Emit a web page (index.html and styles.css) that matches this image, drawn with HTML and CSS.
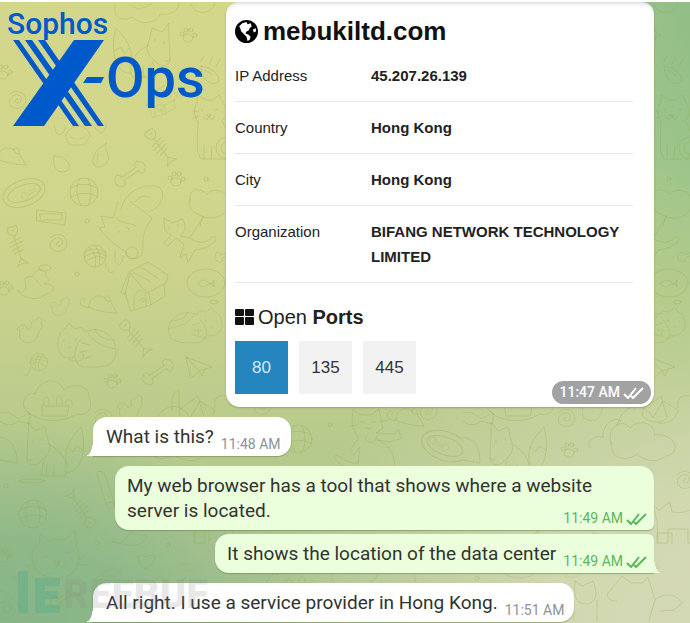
FILE: index.html
```html
<!DOCTYPE html>
<html lang="en">
<head>
<meta charset="utf-8">
<title>Chat</title>
<link rel="stylesheet" href="styles.css">
</head>
<body>
<svg class="wallpaper" aria-hidden="true">
  <defs>
    <g id="paw"><ellipse cx="0" cy="3" rx="5" ry="4"/><circle cx="-6" cy="-1" r="2"/><circle cx="-2" cy="-5" r="2"/><circle cx="3" cy="-5" r="2"/><circle cx="7" cy="0" r="2"/></g>
    <g id="bone"><path d="M-9-2H9C8-7 14-8 15-4 18-4 18 4 15 4 14 8 8 7 9 2H-9C-8 7-14 8-15 4-18 4-18-4-15-4-14-8-8-7-9-2Z"/></g>
    <g id="fishbone"><path d="M-20-5C-16-7-12-5-10-1-12 4-16 6-20 4ZM-10 0H13M-7-6-5 6M-3-7-1 7M1-6 3 6M5-5 7 5M13 0 20-6C18-2 18 2 20 6ZM-16-2v2"/></g>
    <g id="ball"><circle r="14"/><path d="M-13-4C-5-9 5-9 13-4M-4-13C-9-5-8 5-3 13M4-13C8-4 8 6 4 13M-13 5C-4 0 6 0 13 5"/></g>
    <g id="yarn"><circle r="11"/><path d="M-10-4C-4-8 4-8 10-4M-11 1C-4-4 4-5 11 0M-9 6C-3 0 5-1 10 3M-6-9C0-4 2 3 0 11M-1-11C5-5 6 3 4 10M11 7C9 14 15 10 14 16 16 18 18 16 19 15"/></g>
    <g id="spiral"><path d="M-8-5C-2-12 9-8 9 0S-1 11-6 6-5-6 1-5 4 4 0 3-1-1 1-1"/></g>
    <g id="mouse"><path d="M-9 4C-9-6 0-10 7-5 8-9 13-7 12-2L19 10C12 10-2 8-9 4ZM7-5C8-1 11 0 12-2M-9 4C-18 6-20-3-15-5-12-6-11-2-14-2M12 5h1"/></g>
    <g id="bird"><path d="M-13-2C-9-8-4-7-3-2 1-1 2-4 1-8 3-12 5-8 6-11 9-15 14-13 11-7 15-6 11-2 9 0 8 9 2 13-5 11-11 9-11 4-10 0ZM-7-3v1"/></g>
    <g id="house"><path d="M-24 5-16-15 3-25 23-12 21-4 2 6-15-14-20 8-24 5M-20 4-15 24 6 18 4 6M6 18 20 9 19-3M-11 22V9C-8 1 0 2 1 10v9M-12-15 6-5M-4-20 14-8M-6 14C-2 8 2 14-3 15"/></g>
    <g id="fox"><path d="M0 40C0 30 2 12 1 4L8 13 18 9 21 22C25 30 22 37 14 43 10 49 0 48 0 40ZM21 26C36 33 42 45 38 58H14L17 43M19 58 20 46M26 58 27 47M39 54C50 57 62 38 54 9 45 19 35 30 40 47M40 29 46 34 49 28 56 32M6 22v3M15 20v3M1 42h4"/></g>
    <g id="catface"><path d="M-25-4C-25-9-21-11-18-13L-17-24-7-17C-2-19 3-19 7-18L18-27 20-11C26 5 18 20 0 20-17 20-25 10-25-4ZM-13-1q2-2 4 0M8-5q2-2 4 0M-3 4 3 3 1 6ZM1 6q-1 6-6 4M1 6q3 5 7 1M-23 5-31 9M-22 10-28 15M22 1 28-1M21 6 29 7"/></g>
    <g id="catsit"><path d="M3 24C-2 16-1 9 2 5L3-3 11 2H18L24-3 29 6C33 14 31 20 27 23 36 37 36 48 30 61H6C0 52 3 38 3 24ZM9 61V47M16 61 17 48M7 11v2M20 12q2-2 4 0M12 17h4l-2 2ZM14 19q-3 5-6 0M14 19q3 5 6 0M-2 20 4 18M-2 13 4 14"/><circle cx="32" cy="50" r="11"/><circle cx="32" cy="50" r="6"/></g>
    <g id="catsleep"><path d="M-12 12C-24 17-30 4-28-4L-26-12-20-17-17-22-11-16-4-18-1-13C14-20 30-10 30 6 30 18 22 22 10 22H-4C-14 17-13 4-5-6M-22-5v2M-10-6v2M-19 2q2 2 4 0M-17 14C-10 19 0 16-3 8M9-16C11-9 18-5 28-5M2-12C7-3 17 2 29 4M-4-2 4 0M-6 7 2 6M-2 14 5 11"/></g>
    <g id="dog"><path d="M18-34 39-18C32-7 29 0 30 12 30 25 15 26 12 15-1 8-8 0-14-8L-8-9-12-20 0-18 5-34M3-18C9-12 16-14 23-10M2 15V25C5 31 10 29 10 20M6-5v2M13-9q3 0 3 3"/><circle cx="19" cy="17" r="6"/></g>
    <g id="cloud"><path d="M-29 23C-39 16-31 2-22 5-18-9 0-14 7 1 15-6 33-5 32 9 38 20 28 28 19 25 8 34-19 34-29 23ZM-15 17 12 17 10 27H-14ZM-13 16C-17 6-6 5-8 16M0 16C-3 3 7 4 5 16M9 16C7 9 17 9 15 16"/></g>
    <g id="oval"><ellipse rx="22" ry="13"/><ellipse rx="17" ry="8"/></g>
    <g id="plane"><path d="M-13-10 13 0 0 4-8 11ZM-13-10 0 4 3 9 6 2"/></g>
    <pattern id="pets" width="463" height="640" patternUnits="userSpaceOnUse">
      <g class="ink">
        <path d="M115 5C112 18 124 22 132 17 142 27 158 22 160 14 172 16 182 8 178 0M129 3q9 12 23 0M191 4C194 15 212 16 215 3"/>
        <use href="#fox" transform="matrix(-1 0 0 1 170 19)"/><use href="#paw" x="188" y="35"/><use href="#spiral" x="17" y="100"/><use href="#paw" x="3" y="72"/>
        <path d="M201 66C202 84 214 86 219 81 220 75 211 67 201 66ZM201 61l3-5M209 64l4-7M216 67l4-8M205 70l8 5"/>
        <use href="#catsit" x="195" y="98"/><use href="#house" transform="translate(162 102) scale(.65)"/>
        <use href="#fishbone" transform="translate(160 147) rotate(52)"/><use href="#fishbone" transform="translate(17 246) rotate(72)"/>
        <use href="#fishbone" transform="translate(135 338) rotate(50)"/><use href="#fishbone" transform="translate(81 509) rotate(235)"/>
        <path d="M54 125C57 143 65 132 66 126M94 126q8 15 13-2M65 136C70 123 88 123 90 136L84 145H70ZM70 137l5 2M85 137l-5 2"/>
        <path d="M54 155C59 160 59 154 65 159 72 165 70 172 62 172 53 171 53 162 54 155ZM106 143C98 150 96 149 94 157 89 168 102 170 107 162 112 154 104 155 106 143M98 154l-1 9"/>
        <use href="#mouse" x="7" y="155"/><use href="#bone" transform="translate(130 174) rotate(-35)"/><use href="#paw" x="176" y="179"/>
        <use href="#oval" transform="translate(24 193) rotate(-20)"/><use href="#bone" transform="translate(31 192) rotate(-30) scale(.6)"/>
        <use href="#ball" x="84" y="192"/><circle cx="206" cy="179" r="2"/>
        <path d="M121 209C124 194 141 182 159 187 167 193 161 208 150 211M135 202q7-10 15-4"/>
        <path d="M190 200C187 188 202 187 207 195 210 188 225 188 229 200 231 214 214 222 202 216 192 213 188 208 190 200ZM203 216l-3 10"/>
        <path d="M37 210 66 213 65 225 37 221ZM40 214h22v6H41Z"/><circle cx="87" cy="221" r="2"/>
        <use href="#spiral" x="58" y="243"/><use href="#yarn" x="95" y="256"/><use href="#dog" x="113" y="236"/>
        <path d="M164 218 172 223 183 219C187 228 184 233 180 236L190 238C198 244 206 244 212 237 217 236 217 241 213 243 205 250 198 249 195 250L188 262 186 254 180 258 184 244 176 238 168 246 164 243 171 235C162 231 165 226 164 218ZM190 238 203 217M169 227v2M178 225v2"/>
        <use href="#bone" transform="translate(228 254) rotate(-20) scale(.8)"/><use href="#house" x="145" y="287"/>
        <ellipse cx="206" cy="283" rx="19" ry="14"/><path d="M198 283q6-6 11 0 3 3 5-3v7q-2-5-5-3-6 6-11 0Z"/>
        <path d="M18 291C27 295 27 286 24 280 27 274 35 279 34 274 36 267 47 269 46 276L50 280 44 284C57 284 55 293 46 294 39 301 24 300 18 291ZM35 278l6 8"/><ellipse cx="45" cy="268" rx="6" ry="3"/>
        <use href="#paw" x="4" y="288"/><circle cx="77" cy="274" r="2"/><use href="#mouse" x="98" y="303"/>
        <use href="#bird" transform="translate(60 307) scale(.75)"/><use href="#bird" x="30" y="331"/><use href="#catsleep" x="86" y="345"/>
        <use href="#catsleep" transform="matrix(-.92 0 0 .8 196 325)"/><ellipse cx="214" cy="302" rx="4" ry="2"/>
        <use href="#yarn" transform="matrix(-.8 0 0 .8 39 362)"/><use href="#bone" transform="translate(158 372) rotate(-35)"/><use href="#plane" x="199" y="367"/>
        <use href="#paw" x="112" y="381"/><use href="#cloud" x="57" y="389"/><use href="#bird" x="130" y="409"/>
        <path d="M172 410C171 396 175 389 179 391V407M180 409 198 396 204 418C199 424 185 423 180 416ZM215 408q-3-15 12-12"/>
        <use href="#fox" x="27" y="418"/><ellipse cx="32" cy="481" rx="13" ry="2"/><circle cx="6" cy="486" r="2"/><use href="#ball" x="33" y="514"/>
        <path d="M97 474C96 470 104 471 105 475L115 505C112 511 107 508 106 504ZM106 504q6-5 8 1"/>
        <use href="#catface" x="57" y="558"/><use href="#paw" x="3" y="555"/><circle cx="97" cy="543" r="2"/><circle cx="168" cy="545" r="2"/><circle cx="14" cy="578" r="2"/>
        <path d="M146 569C134 562 137 551 146 557 155 551 160 560 146 569Z"/><use href="#oval" transform="translate(111 573) rotate(-12) scale(.5 .35)"/><use href="#oval" transform="translate(186 567) scale(.5 .3)"/>
        <path d="M112 541C125 547 125 537 130 533L147 536C145 545 134 549 112 541ZM194 544V533h15v11"/>
        <use href="#bone" transform="translate(66 596) rotate(-35)"/><path d="M-4 592 3 590C14 600 25 608 29 625M0 603C12 599 20 611 10 618 5 621 0 619-3 616"/><circle cx="7" cy="609" r="4"/>
        <path d="M112 581 119 586 130 581C136 594 132 605 122 604 111 603 111 592 112 581ZM111 603V623M134 600V623M148 590 159 576 168 583H180L185 577 192 600 185 623M148 590C140 595 146 602 154 601M192 600C204 591 214 595 219 603L211 610 198 611"/>
        <path d="M127 448C122 439 136 434 140 438 139 424 151 416 158 421M148 443C143 426 160 418 167 428 177 417 194 425 191 435 213 432 219 454 203 456 193 465 178 459 174 454 160 464 147 456 148 443ZM154 426C158 405 180 399 190 418L200 401 215 410C212 421 205 424 195 423"/>
        <use href="#paw" x="106" y="450"/><use href="#spiral" x="103" y="418"/><use href="#spiral" x="222" y="480"/><circle cx="157" cy="481" r="2"/>
        <path d="M190 505 196 510 207 502 209 512C222 515 228 507 233 511V543H225V529H205V543H195L194 521Z"/>
        <path d="M353 410 362 415H371L379 409 383 428 376 433 395 434 398 429 402 438 390 442 377 440C393 446 396 460 394 470H359C349 468 338 466 334 457 338 451 345 465 358 463L360 447 354 455 350 450 359 438C350 427 352 420 353 410ZM360 422h5M371 422h5M366 427q3 4 6 0M350 426l7-1M380 422l8-2M367 435C360 444 377 446 377 436"/>
        <use href="#ball" x="298" y="439"/><circle cx="330" cy="425" r="2"/><use href="#oval" transform="translate(445 446) rotate(20) scale(1.1)"/><use href="#bone" transform="translate(439 444) rotate(30) scale(.6)"/>
        <use href="#spiral" x="428" y="411"/><use href="#spiral" x="262" y="406"/>
        <path d="M0 413C8 410 14 415 18 419L30 413V424L18 421C10 428 3 424 0 421M0 437C10 439 17 445 17 463L0 460"/>
        <use href="#mouse" x="405" y="416"/><use href="#cloud" x="300" y="570"/><use href="#catface" x="395" y="590"/>
      </g>
    </pattern>
  </defs>
  <rect width="100%" height="100%" fill="url(#pets)"/>
</svg>

<header class="brand">
  <span class="brand-top">Sophos</span>
  <span class="brand-row">
    <svg class="brand-x" viewBox="0 0 92 86" aria-hidden="true">
      <path d="M61 0H91L31 86H0ZM0 0H6L66 86H60ZM12 0H19L79 86H72ZM25 0H32L91 86H85ZM74 37H91L88 43H70Z"/>
    </svg>
    <span class="brand-ops">Ops</span>
  </span>
</header>

<main class="chat">
  <article class="card">
    <h1><svg class="globe" viewBox="0 0 22 22" aria-hidden="true"><circle cx="11" cy="11" r="11"/><path d="M4 6 7 3 11 2 12 4 15 3 16 6 14 8 13 10 11 11 10 13 13 14 15 16 14 19 12 20 11 16 8 13 6 11 5 8ZM17 9 20 8 20 11 18 12Z"/></svg>mebukiltd.com</h1>
    <dl>
      <div class="row"><dt>IP Address</dt><dd>45.207.26.139</dd></div>
      <div class="row"><dt>Country</dt><dd>Hong Kong</dd></div>
      <div class="row"><dt>City</dt><dd>Hong Kong</dd></div>
      <div class="row"><dt>Organization</dt><dd>BIFANG NETWORK TECHNOLOGY LIMITED</dd></div>
    </dl>
    <h2><svg class="tiles" viewBox="0 0 19 16" aria-hidden="true"><rect width="9" height="7" rx="1"/><rect x="10" width="9" height="7" rx="1"/><rect y="8" width="9" height="8" rx="1"/><rect x="10" y="8" width="9" height="8" rx="1"/></svg><span>Open <strong>Ports</strong></span></h2>
    <ul class="ports"><li class="active">80</li><li>135</li><li>445</li></ul>
    <p class="stamp badge"><time>11:47 AM</time><svg class="ticks" viewBox="0 0 21 12" aria-hidden="true"><path d="M1 7 5 11 13 1M8 9 10 11 20 1"/></svg></p>
  </article>

  <p class="bubble in tail">What is this?<span class="stamp"><time>11:48 AM</time></span></p>
  <p class="bubble out">My web browser has a tool that shows where a website server is located.<span class="stamp"><time>11:49 AM</time><svg class="ticks" viewBox="0 0 21 12" aria-hidden="true"><path d="M1 7 5 11 13 1M8 9 10 11 20 1"/></svg></span></p>
  <p class="bubble out tail follow">It shows the location of the data center<span class="stamp"><time>11:49 AM</time><svg class="ticks" viewBox="0 0 21 12" aria-hidden="true"><path d="M1 7 5 11 13 1M8 9 10 11 20 1"/></svg></span></p>
  <p class="bubble in tail">All right. I use a service provider in Hong Kong.<span class="stamp"><time>11:51 AM</time></span></p>
</main>

<div class="watermark" aria-hidden="true">
  <svg viewBox="0 0 42 42"><path d="M0 0H10V42H0ZM17 7H42V15H27V20H40V28H27V34H42V42H17Z"/></svg><span>REEBUF</span>
</div>
</body>
</html>
```
FILE: styles.css
```css
* { box-sizing: border-box; }

body {
  margin: 0;
  min-height: 100vh;
  position: relative;
  overflow: hidden;
  border-top: 2px solid #fff;
  font-family: Roboto, "Liberation Sans", sans-serif;
  color: #303330;
  background:
    radial-gradient(ellipse 330px 230px at 0 104%, #84b488 0, #8eb888 45%, transparent 100%),
    radial-gradient(ellipse 300px 420px at 105% 0, #8ebc85 0, #9cc48b 40%, transparent 100%),
    radial-gradient(ellipse 500px 330px at 110% 100%, #d5d9b7 0, #d1d8b0 40%, transparent 100%),
    linear-gradient(#d3d78b 0, #d0d68c 30%, #c8d18d 50%, #b9cb8c 68%, #a9c293 100%);
}

.wallpaper { position: absolute; top: -2px; left: 0; width: 100%; height: 100%; }
.ink { fill: none; stroke: #8c9f38; stroke-opacity: .27; stroke-width: 1; stroke-linejoin: round; stroke-linecap: round; }

.brand { position: absolute; top: 5px; left: 7px; color: #0059cb; font-weight: 500; }
.brand-top { display: block; font-size: 30px; line-height: 33px; }
.brand-row { display: flex; margin-left: 6px; }
.brand-x { width: 92px; height: 86px; fill: currentColor; }
.brand-ops { font-size: 56px; line-height: 76px; margin-left: 1px; }

.chat {
  position: relative;
  display: flex;
  flex-direction: column;
  gap: 10px;
  padding: 0 36px 0 93px;
}

.card {
  position: relative;
  align-self: flex-end;
  width: 100%;
  max-width: 428px;
  padding: 12px 21px 13px 9px;
  border-radius: 12px 12px 14px 14px;
  background: #fff;
  box-shadow: 0 1px 2px #69823c80, inset 0 4px 4px -3px #0003;
  font-family: "Liberation Sans", Arial, sans-serif;
  color: #222;
}
.card h1 { display: flex; align-items: center; gap: 5px; margin: 0 0 2px; font-size: 26px; line-height: 34px; color: #111; }
.globe { width: 23px; height: 23px; }
.globe path { fill: #fff; }
.card dl { margin: 0; font-size: 15px; line-height: 25px; }
.row { display: flex; padding: 13px 0; border-bottom: 1px solid #e6e6e6; }
.row dt { flex: 0 0 136px; }
.row dd { margin: 0; font-weight: bold; }
.card h2 { display: flex; align-items: center; gap: 4px; margin: 22px 0 12px; font-size: 20px; line-height: 24px; font-weight: normal; }
.tiles { width: 19px; height: 16px; fill: #111; }
.ports { display: flex; gap: 11px; margin: 0; padding: 0; list-style: none; font-size: 17px; }
.ports li { width: 53px; line-height: 53px; text-align: center; background: #f2f2f2; color: #333; }
.ports .active { background: #2585be; color: #d3ebf8; }

.bubble {
  position: relative;
  display: flow-root;
  width: fit-content;
  max-width: 539px;
  margin: 0;
  padding: 7px 10px 7px 13px;
  border-radius: 14px;
  font-size: 19px;
  line-height: 25px;
  box-shadow: 0 1px 1px #607c4580;
}
.in { background: #fff; }
.out { align-self: flex-end; padding: 7px 7px 7px 12px; background: #ebffdc; }
.follow { margin-top: -6px; }
.out:not(.tail) { border-bottom-right-radius: 6px; }
.follow { border-top-right-radius: 6px; }
.in.tail { border-bottom-left-radius: 0; }
.out.tail { border-bottom-right-radius: 0; }
.tail::before { content: ""; position: absolute; bottom: 0; width: 7px; height: 16px; }
.in.tail::before { left: -7px; background: radial-gradient(ellipse 7px 16px at 0 0, transparent 97%, #fff 100%); }
.out.tail::before { right: -7px; background: radial-gradient(ellipse 7px 16px at 100% 0, transparent 97%, #ebffdc 100%); }

.stamp { display: flex; align-items: center; gap: 3px; font-size: 14px; line-height: 17px; color: #8d9299; }
.bubble .stamp { float: right; margin: 12px 0 -4px 7px; }
.out .stamp { color: #59b75c; }
.ticks { width: 21px; height: 12px; fill: none; stroke: currentColor; stroke-width: 2; }
.badge { position: absolute; right: 3px; bottom: 3px; margin: 0; padding: 3px 7px; border-radius: 12px; background: #a2a2a2; color: #fff; font-family: Roboto, sans-serif; font-weight: 500; }

.watermark { position: absolute; left: 18px; bottom: 7px; display: flex; align-items: center; gap: 3px; color: #8883; font-size: 40px; line-height: 42px; font-weight: 900; pointer-events: none; }
.watermark svg { width: 42px; height: 42px; fill: #3fa58b; fill-opacity: .28; }
.watermark span { padding-top: 6px; }
```
